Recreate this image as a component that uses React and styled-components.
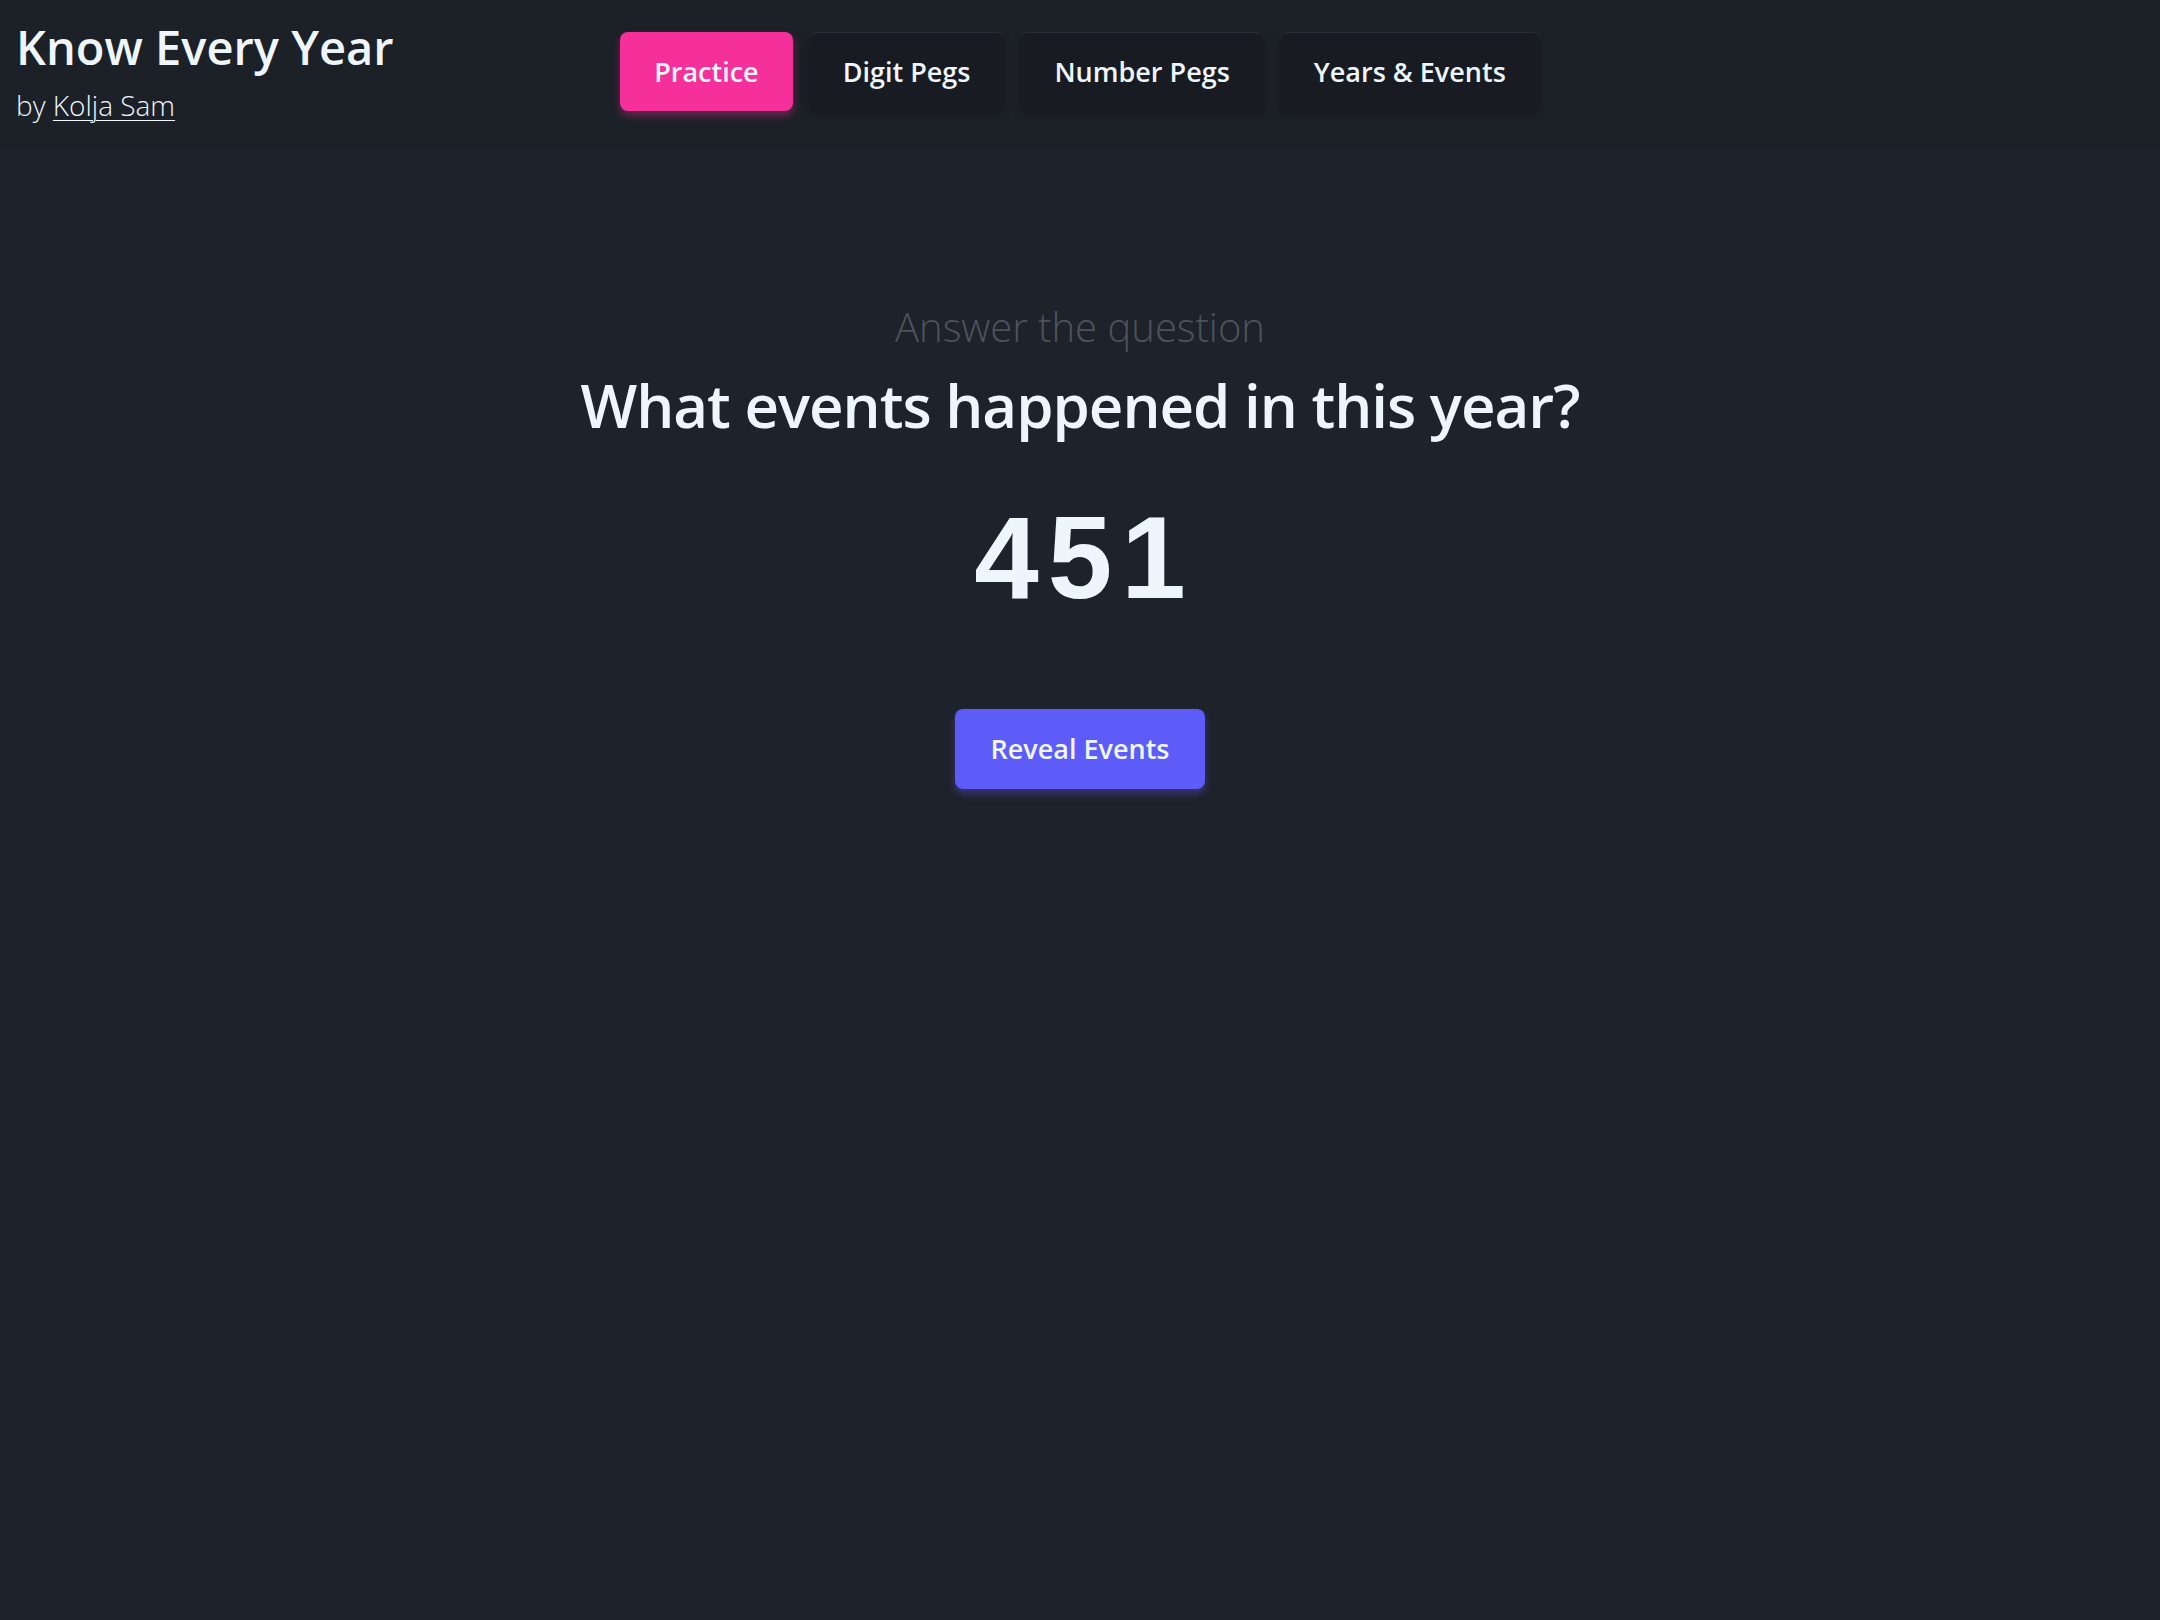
import React from "react";
import styled, { createGlobalStyle } from "styled-components";

const GlobalStyle = createGlobalStyle`
  html, body {
    margin: 0;
    padding: 0;
    background: #1e222a;
    color: #eef5fb;
    font-family: "Open Sans", "Noto Sans", sans-serif;
  }
  #root {
    min-height: 100vh;
  }
`;

const Page = styled.div`
  min-height: 100vh;
  background: #1e222a;
`;

const Header = styled.header`
  display: grid;
  grid-template-columns: 1fr auto 1fr;
  align-items: center;
  height: 143px;
  padding: 0 16px;
  box-sizing: border-box;
  background: #1c2027;
  box-shadow: 0 2px 6px rgba(0, 0, 0, 0.18);
`;

const Brand = styled.div`
  display: flex;
  flex-direction: column;
  align-self: start;
  padding-top: 19px;
`;

const Title = styled.h1`
  margin: 0;
  font-size: 47px;
  font-weight: 600;
  line-height: 1.2;
`;

const Byline = styled.div`
  margin-top: 11px;
  font-size: 28px;
  font-weight: 300;
  line-height: 1.4;

  a {
    color: inherit;
    text-decoration: underline;
    text-underline-offset: 4px;
    text-decoration-thickness: 1px;
  }
`;

const Nav = styled.nav`
  display: flex;
  gap: 16px;
`;

const NavButton = styled.button`
  font-family: inherit;
  font-size: 27px;
  font-weight: 600;
  line-height: 42px;
  color: #eef5fb;
  padding: 18px 34px 18px;
  border: none;
  border-top: 1px solid #2a2f37;
  border-radius: 8px;
  cursor: pointer;
  background: ${(p) => (p.$active ? "#f5309a" : "#181c22")};
  border-top-color: ${(p) => (p.$active ? "#f5309a" : "#2a2f37")};
  box-shadow: ${(p) =>
    p.$active
      ? "0 5px 8px rgba(245, 48, 154, 0.35)"
      : "0 4px 8px rgba(0, 0, 0, 0.2)"};
`;

const Main = styled.main`
  display: flex;
  flex-direction: column;
  align-items: center;
  padding-top: 160px;
  text-align: center;
`;

const Prompt = styled.div`
  font-size: 40px;
  font-weight: 300;
  line-height: 1.2;
  color: #4d525b;
`;

const Question = styled.h2`
  margin: 18px 0 0;
  font-size: 60px;
  font-weight: 600;
  line-height: 1.2;
  letter-spacing: -1px;
`;

const Year = styled.div`
  margin-top: 48px;
  font-family: "Liberation Sans", Arial, sans-serif;
  font-size: 116px;
  font-weight: 700;
  line-height: 1.2;
  letter-spacing: 9px;
  padding-left: 9px;
`;

const RevealButton = styled.button`
  margin-top: 81px;
  font-family: inherit;
  font-size: 27px;
  font-weight: 600;
  line-height: 42px;
  color: #eef5fb;
  background: #5d5cf9;
  border: none;
  border-radius: 8px;
  padding: 19px 35px;
  cursor: pointer;
  box-shadow: 0 5px 8px rgba(93, 92, 249, 0.35);
`;

const tabs = ["Practice", "Digit Pegs", "Number Pegs", "Years & Events"];

export default function App() {
  return (
    <Page>
      <GlobalStyle />
      <Header>
        <Brand>
          <Title>Know Every Year</Title>
          <Byline>
            by <a href="#">Kolja Sam</a>
          </Byline>
        </Brand>
        <Nav>
          {tabs.map((t) => (
            <NavButton key={t} $active={t === "Practice"}>
              {t}
            </NavButton>
          ))}
        </Nav>
        <div />
      </Header>
      <Main>
        <Prompt>Answer the question</Prompt>
        <Question>What events happened in this year?</Question>
        <Year>451</Year>
        <RevealButton>Reveal Events</RevealButton>
      </Main>
    </Page>
  );
}
